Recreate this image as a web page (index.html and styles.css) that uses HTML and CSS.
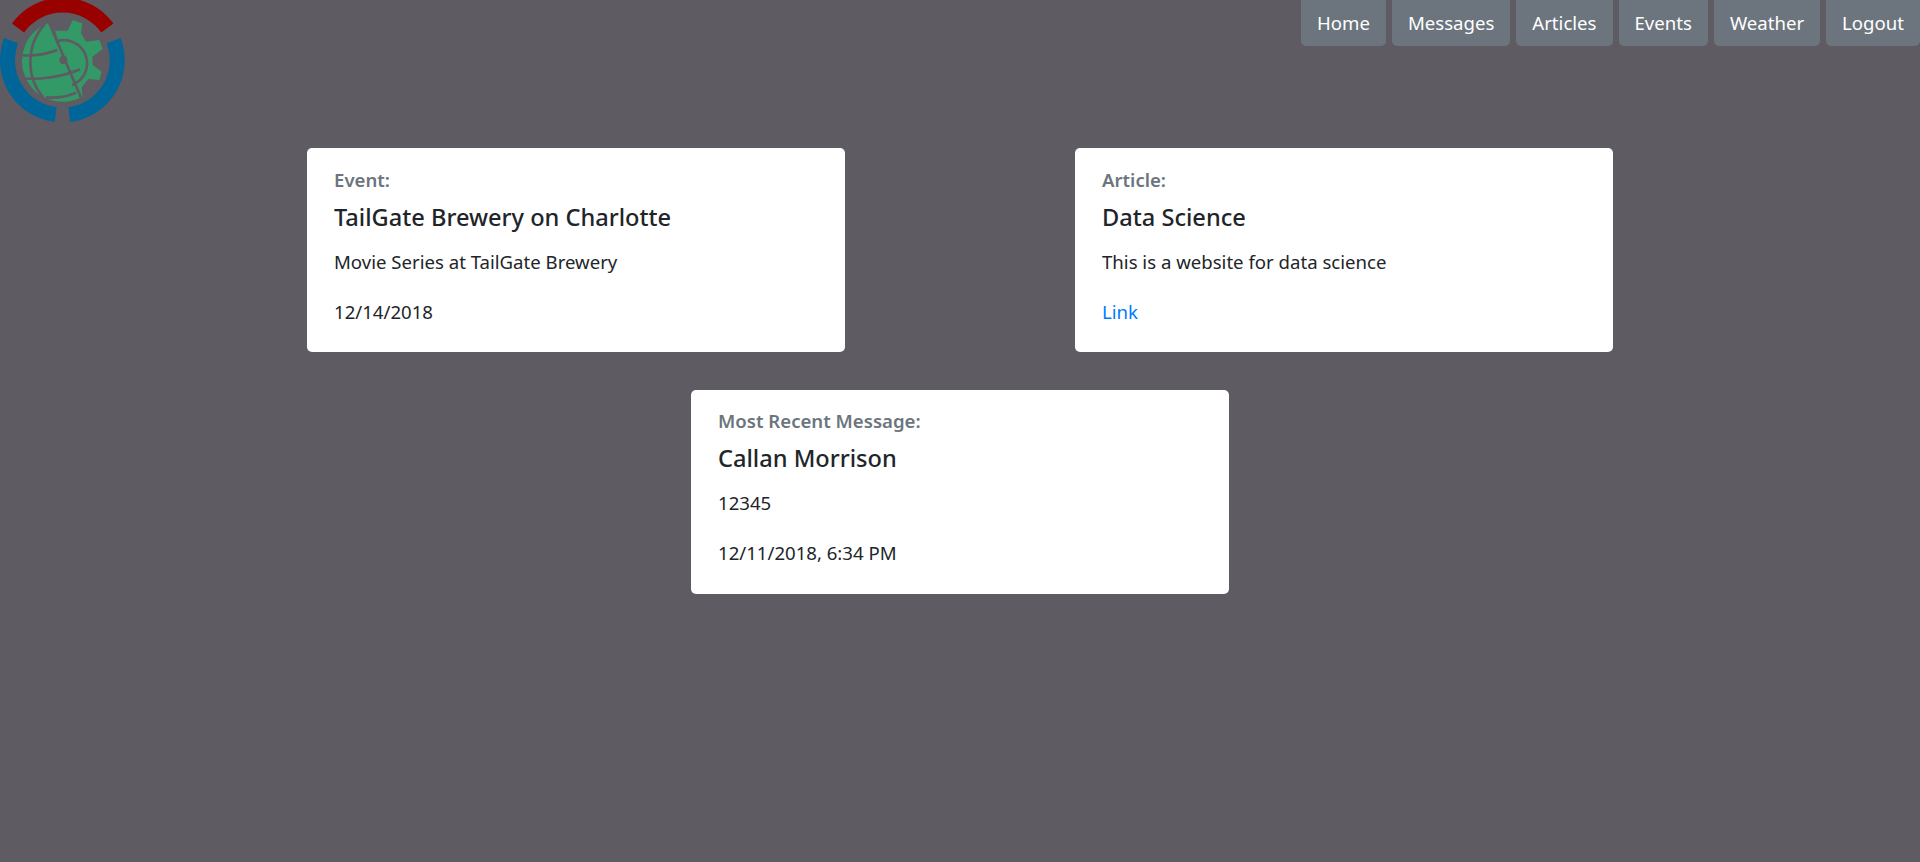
FILE: index.html
```html
<!DOCTYPE html>
<html>
<head>
  <title>Dashboard</title>
  <link rel="stylesheet" href="styles.css">
</head>
<body>
  <header class="top">
    <svg class="logo" viewBox="0 0 420 390" width="140" height="130">
      <g fill="none" stroke-width="45">
        <path class="ring-red" d="M54 84A165 165 0 0 1 322 84"/>
        <path class="ring-blue" d="M33 122A165 165 0 0 0 167 344"/>
        <path class="ring-blue" d="M208 344A165 165 0 0 0 341 122"/>
      </g>
      <path class="green" d="M145 69A122 122 0 1 0 245 291Z"/>
      <path class="green" d="M165 92L203 92L218 60L247 70L243 100L258 125L298 120L308 147L277 170L278 195L305 215L298 240L265 237L245 262L248 295L200 200Z"/>
      <g class="grid" fill="none" stroke-width="8">
        <path d="M145 62L245 298"/>
        <path d="M135 72C80 130 75 230 130 292"/>
        <path d="M62 165C100 170 140 162 172 150"/>
        <path d="M66 235C120 240 190 230 240 208"/>
        <path d="M138 292C170 295 200 290 228 278"/>
        <path d="M168 125A62 62 0 0 1 216 255"/>
      </g>
      <circle class="notch" cx="190" cy="180" r="12"/>
    </svg>
    <nav class="nav">
      <a class="nav-btn" href="#">Home</a>
      <a class="nav-btn" href="#">Messages</a>
      <a class="nav-btn" href="#">Articles</a>
      <a class="nav-btn" href="#">Events</a>
      <a class="nav-btn" href="#">Weather</a>
      <a class="nav-btn" href="#">Logout</a>
    </nav>
  </header>

  <main>
    <div class="row">
      <div class="card">
        <h6>Event:</h6>
        <h5>TailGate Brewery on Charlotte</h5>
        <p>Movie Series at TailGate Brewery</p>
        <p>12/14/2018</p>
      </div>
      <div class="card">
        <h6>Article:</h6>
        <h5>Data Science</h5>
        <p>This is a website for data science</p>
        <p><a href="#">Link</a></p>
      </div>
    </div>
    <div class="row">
      <div class="card card-message">
        <h6>Most Recent Message:</h6>
        <h5>Callan Morrison</h5>
        <p>12345</p>
        <p>12/11/2018, 6:34 PM</p>
      </div>
    </div>
  </main>
</body>
</html>
```

FILE: styles.css
```css
body {
  margin: 0;
  min-height: 862px;
  background-color: #5e5b62;
  font-family: "Noto Sans", "Open Sans", sans-serif;
  font-size: 18.6px;
  color: #212529;
}

.top {
  display: flex;
  justify-content: space-between;
  align-items: flex-start;
  height: 148px;
}

.logo {
  display: block;
}

.ring-red {
  stroke: #990000;
}

.ring-blue {
  stroke: #006699;
}

.green {
  fill: #339966;
}

.grid {
  stroke: #5e5b62;
}

.notch {
  fill: #5e5b62;
}

.nav {
  display: flex;
  gap: 6px;
}

.nav-btn {
  display: block;
  height: 46px;
  line-height: 46px;
  padding: 0 16px;
  background-color: #6c757d;
  border-radius: 0 0 5px 5px;
  color: #fff;
  text-decoration: none;
}

.row {
  display: flex;
  justify-content: center;
  gap: 230px;
  margin-bottom: 38px;
}

.card {
  box-sizing: border-box;
  width: 538px;
  height: 204px;
  padding: 19px 27px;
  background-color: #fff;
  border-radius: 5px;
}

.card-message {
  padding-top: 18px;
}

.card h6 {
  margin: 0 0 9px;
  font-size: 18.6px;
  line-height: 26px;
  font-weight: 600;
  color: #6c757d;
}

.card h5 {
  margin: 0 0 16px;
  font-size: 23.6px;
  line-height: 30px;
  font-weight: 500;
}

.card p {
  margin: 0 0 23px;
  line-height: 27px;
}

.card a {
  color: #007bff;
  text-decoration: none;
}
```
